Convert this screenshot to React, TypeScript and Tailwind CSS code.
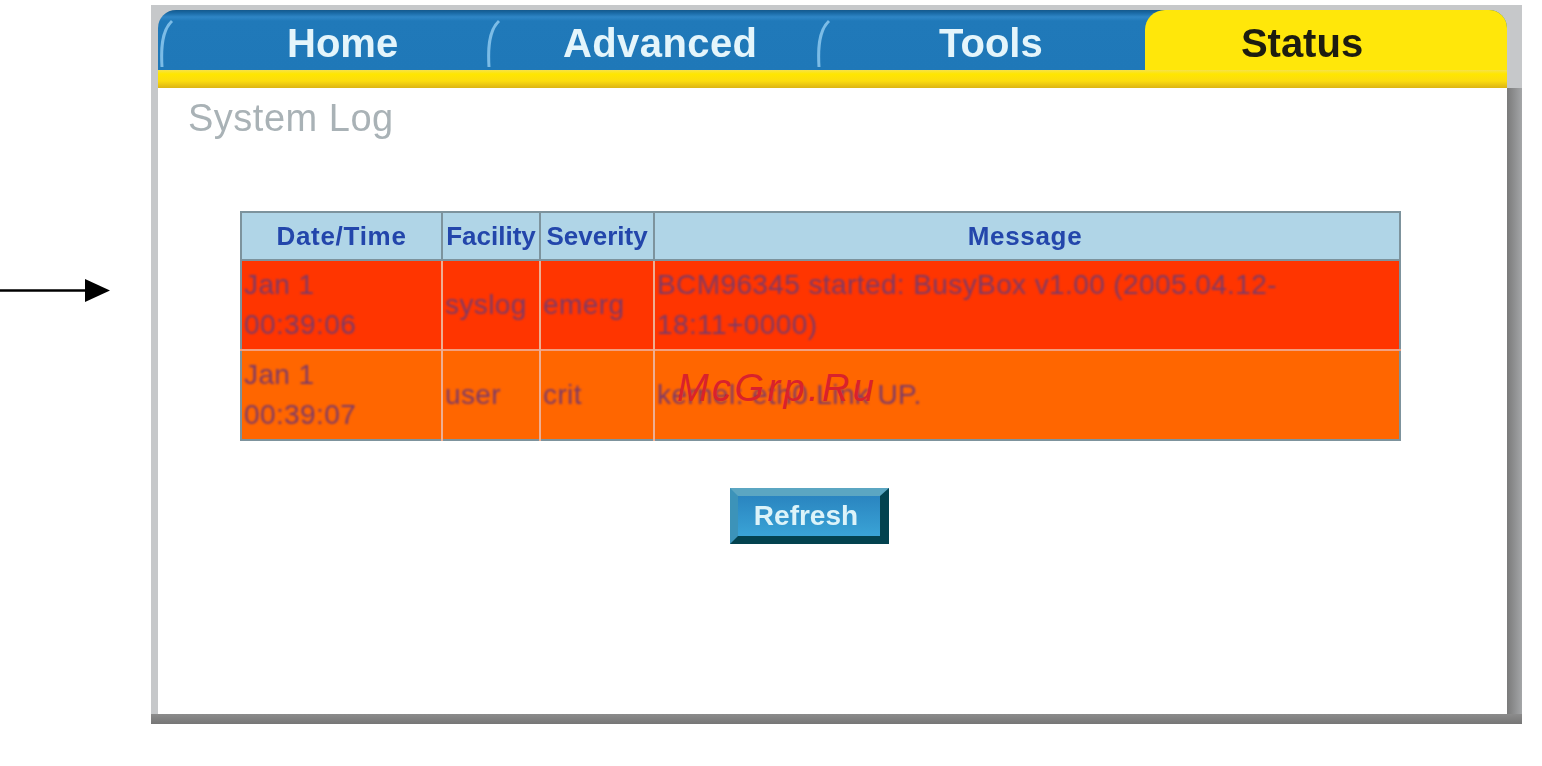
const sans = "font-['Liberation_Sans',Arial,sans-serif]";

function Curve() {
  return (
    <svg width="14" height="52" viewBox="0 0 14 52" className="shrink-0 blur-[0.5px]" fill="none">
      <path d="M2 50 C1 34 1 14 12 4" stroke="#7cbce6" strokeWidth="3" />
    </svg>
  );
}

function Tab({ label, width, textClass }: { label: string; width: string; textClass: string }) {
  return (
    <div className={`${width} h-full flex items-center`}>
      <div className="pt-[6px] pl-[2px]"><Curve /></div>
      <span className={`text-[#e4f5fb] text-[40px] font-bold leading-none blur-[0.7px] pt-[5px] ${textClass}`}>{label}</span>
    </div>
  );
}

const cell = "border-r-2 border-[#eeae92] pl-[2px] pr-0 align-middle";
const headCell = "border-r-2 border-[#7d939d] text-center font-bold text-[#2346ab] p-0";
const bodyText = "blur-[0.9px] tracking-[0.4px]";

export default function App() {
  return (
    <div className={`${sans} w-[1542px] h-[766px] overflow-hidden bg-white flex`}>
      <div className="w-[151px] pt-[279px] shrink-0">
        <svg width="112" height="24" viewBox="0 0 112 24">
          <path d="M0 11.5H88" stroke="#000" strokeWidth="2.5" />
          <path d="M85 0L110 11.5L85 23Z" fill="#000" />
        </svg>
      </div>

      <div className="w-[1371px] h-[719px] mt-[5px] flex flex-col">
        {/* Header */}
        <div className="h-[83px] bg-[#c6c8ca] pt-[5px] pl-[7px] pr-[15px] shrink-0">
          <div className="h-[60px] flex bg-[linear-gradient(180deg,#14598c_0px,#1a6aa6_3px,#2f86c6_7px,#2079b9_11px,#1f78b8_100%)] rounded-t-[18px] overflow-hidden">
            <Tab label="Home" width="w-[327px]" textClass="ml-[113px]" />
            <Tab label="Advanced" width="w-[330px]" textClass="ml-[62px] tracking-[0.4px]" />
            <Tab label="Tools" width="w-[330px]" textClass="ml-[108px]" />
            <div className="flex-1 h-full bg-[#ffe70a] rounded-tl-[20px] flex items-center justify-center pr-[48px]">
              <span className="text-[#1d1d10] text-[40px] font-bold leading-none blur-[0.7px] pt-[5px]">Status</span>
            </div>
          </div>
          <div className="h-[18px] bg-[linear-gradient(180deg,#f6e24a_0px,#ffe600_4px,#fbdc10_11px,#dcb414_100%)]" />
        </div>

        {/* Body */}
        <div className="flex-1 flex min-h-0">
          <div className="w-[7px] bg-[#c6c8ca] shrink-0" />
          <div className="flex-1 bg-white">
            <h1 className="pt-[10px] pl-[30px] text-[38px] leading-[40px] text-[#a9b2b6] blur-[0.7px] tracking-[0.5px]">System Log</h1>

            <div className="pt-[73px] pl-[82px]">
              <table className="w-[1161px] h-[230px] table-fixed border-collapse border-2 border-[#7d939d] text-[28px] leading-[40px]">
                <colgroup>
                  <col className="w-[201px]" />
                  <col className="w-[98px]" />
                  <col className="w-[114px]" />
                  <col />
                </colgroup>
                <thead>
                  <tr className="h-[48px] bg-[#b0d5e7] border-b-2 border-[#7d939d] text-[26px]">
                    <th className={headCell}><span className="blur-[0.7px] block tracking-[0.7px]">Date/Time</span></th>
                    <th className={headCell}><span className="blur-[0.7px] block">Facility</span></th>
                    <th className={headCell}><span className="blur-[0.7px] block">Severity</span></th>
                    <th className="text-center font-bold text-[#2346ab] p-0"><span className="blur-[0.7px] block tracking-[0.7px] pr-[4px]">Message</span></th>
                  </tr>
                </thead>
                <tbody className="text-[#7c3a68]">
                  <tr className="h-[90px] bg-[#ff3500] border-b-2 border-[#f2a080]">
                    <td className={cell}><div className={bodyText}>Jan 1<br />00:39:06</div></td>
                    <td className={cell}><div className={bodyText}>syslog</div></td>
                    <td className={cell}><div className={bodyText}>emerg</div></td>
                    <td className="pl-[2px] pr-0 align-middle"><div className={bodyText}>BCM96345 started: BusyBox v1.00 (2005.04.12-<br />18:11+0000)</div></td>
                  </tr>
                  <tr className="h-[90px] bg-[#ff6600]">
                    <td className={cell}><div className={bodyText}>Jan 1<br />00:39:07</div></td>
                    <td className={cell}><div className={bodyText}>user</div></td>
                    <td className={cell}><div className={bodyText}>crit</div></td>
                    <td className="pl-[2px] pr-0 align-middle relative">
                      <div className={bodyText}>kernel: eth0 Link UP.</div>
                      <span className="absolute left-[22px] top-[17px] text-[38px] leading-[40px] italic tracking-[3.4px] text-[#d9222c]">McGrp.Ru</span>
                    </td>
                  </tr>
                </tbody>
              </table>
            </div>

            <div className="pt-[47px] pl-[572px]">
              <button className="w-[159px] h-[56px] border-t-[8px] border-l-[8px] border-r-[9px] border-b-[8px] border-t-[#5ba6c2] border-l-[#3c93b9] border-r-[#03424f] border-b-[#03424f] bg-gradient-to-b from-[#2a85c0] to-[#3aa3d6] text-[#dcf3f9] text-[28px] font-bold leading-none">
                <span className="blur-[0.7px] block pr-[6px]">Refresh</span>
              </button>
            </div>
          </div>
          <div className="w-[15px] shrink-0 bg-gradient-to-r from-[#7a7a7a] to-[#a4a6a8]" />
        </div>
        <div className="h-[10px] shrink-0 bg-gradient-to-b from-[#8c8c8c] to-[#767676]" />
      </div>
    </div>
  );
}
